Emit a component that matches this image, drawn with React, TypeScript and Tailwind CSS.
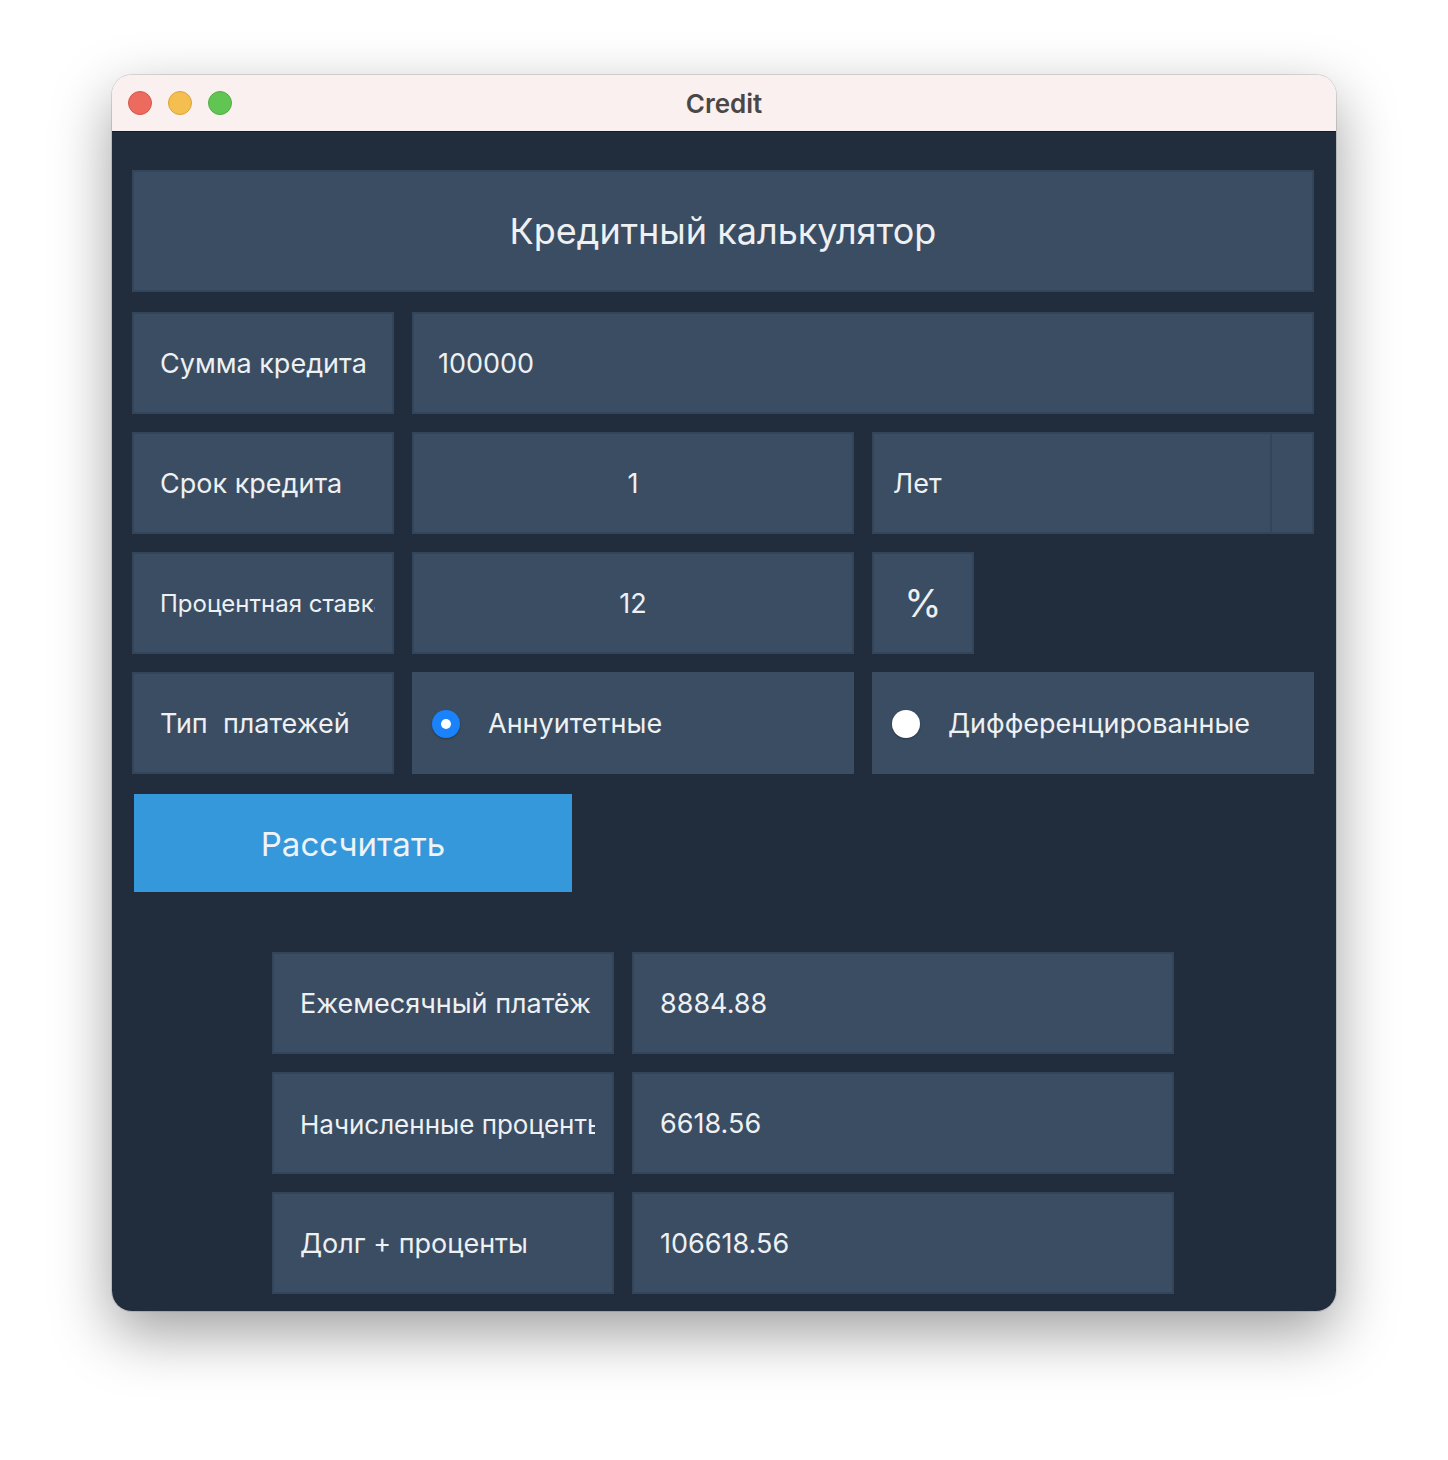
import React from "react";

const font = { fontFamily: "Inter, 'Noto Sans', sans-serif" };

const box = "bg-[#3a4d63] border-2 border-[#33455a] flex items-center text-[#eef0f2]";

// Qt-style label: text is clipped before the right edge
function Label({ text, size = "text-[27px]", width = "w-[262px]" }: { text: string; size?: string; width?: string }) {
  return (
    <div className={`${box} ${width} h-[102px] pl-[26px] pr-[17px] pt-[2px] ${size}`}>
      <span className="flex-1 min-w-0 overflow-hidden whitespace-pre">{text}</span>
    </div>
  );
}

function Radio({ checked, text }: { checked?: boolean; text: string }) {
  return (
    <div className="bg-[#3a4d63] w-[442px] h-[102px] flex items-center pl-[20px] pt-[2px] text-[27px] text-[#eef0f2]">
      {checked ? (
        <span className="w-[28px] h-[28px] rounded-full bg-[#1a82fb] flex items-center justify-center shadow-[0_1px_2px_rgba(0,0,0,0.3)]">
          <span className="w-[10px] h-[10px] rounded-full bg-white" />
        </span>
      ) : (
        <span className="w-[28px] h-[28px] rounded-full bg-white shadow-[0_1px_2px_rgba(0,0,0,0.3)]" />
      )}
      <span className="ml-[28px]">{text}</span>
    </div>
  );
}

export default function App() {
  return (
    <div className="min-h-screen bg-white pt-[75px] pl-[112px]" style={font}>
      <div className="w-[1224px] rounded-[20px] overflow-hidden shadow-[0_22px_60px_rgba(0,0,0,0.38),0_0_0_1px_rgba(0,0,0,0.12)]">
        {/* Title bar */}
        <div className="h-[57px] bg-[#f9f0ef] border-b border-[#1a1a1a] flex items-center relative">
          <div className="flex gap-[16px] pl-[16px]">
            <span className="w-[24px] h-[24px] rounded-full bg-[#ec6a5e] border border-[#d6574c]" />
            <span className="w-[24px] h-[24px] rounded-full bg-[#f5bf4f] border border-[#d9a33a]" />
            <span className="w-[24px] h-[24px] rounded-full bg-[#61c554] border border-[#4fae44]" />
          </div>
          <div className="absolute inset-0 flex items-center justify-center text-[26px] font-semibold text-[#4b4746]">
            Credit
          </div>
        </div>

        {/* Content */}
        <div className="bg-[#212c3d] pt-[38px] pb-[17px] pl-[20px] flex flex-col">
          <div className={`${box} w-[1182px] h-[122px] justify-center text-[36px]`}>
            Кредитный калькулятор
          </div>

          <div className="flex flex-col gap-[18px] mt-[20px]">
            <div className="flex gap-[18px]">
              <Label text="Сумма кредита" />
              <div className={`${box} w-[902px] h-[102px] pl-[24px] pt-[2px] text-[27px]`}>100000</div>
            </div>

            <div className="flex gap-[18px]">
              <Label text="Срок кредита" />
              <div className={`${box} w-[442px] h-[102px] justify-center pt-[2px] text-[27px]`}>1</div>
              <div className={`${box} w-[442px] h-[102px] text-[27px]`}>
                <div className="flex-1 pl-[19px] pt-[2px]">Лет</div>
                <div className="w-[42px] h-full border-l-2 border-[#33455a]" />
              </div>
            </div>

            <div className="flex gap-[18px]">
              <Label text="Процентная ставка" size="text-[24px]" />
              <div className={`${box} w-[442px] h-[102px] justify-center pt-[2px] text-[27px]`}>12</div>
              <div className={`${box} w-[102px] h-[102px] justify-center text-[38px]`}>%</div>
            </div>

            <div className="flex gap-[18px]">
              <Label text="Тип  платежей" />
              <Radio checked text="Аннуитетные" />
              <Radio text="Дифференцированные" />
            </div>
          </div>

          <button className="mt-[20px] ml-[2px] w-[438px] h-[98px] pt-[4px] bg-[#3598db] text-[33px] text-[#eef3f8] flex items-center justify-center">
            Рассчитать
          </button>

          <div className="flex flex-col gap-[18px] mt-[60px] pl-[140px]">
            <div className="flex gap-[18px]">
              <Label text="Ежемесячный платёж" width="w-[342px]" />
              <div className={`${box} w-[542px] h-[102px] pl-[26px] pt-[2px] text-[27px]`}>8884.88</div>
            </div>
            <div className="flex gap-[18px]">
              <Label text="Начисленные проценты" width="w-[342px]" size="text-[26px]" />
              <div className={`${box} w-[542px] h-[102px] pl-[26px] pt-[2px] text-[27px]`}>6618.56</div>
            </div>
            <div className="flex gap-[18px]">
              <Label text="Долг + проценты" width="w-[342px]" />
              <div className={`${box} w-[542px] h-[102px] pl-[26px] pt-[2px] text-[27px]`}>106618.56</div>
            </div>
          </div>
        </div>
      </div>
    </div>
  );
}
